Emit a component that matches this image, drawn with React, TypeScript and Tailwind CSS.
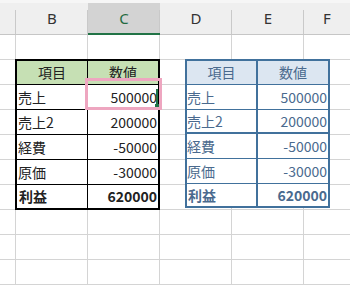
import React from 'react';

const cols = ['', 'B', 'C', 'D', 'E', 'F'];
const bodyRows = 10;

// 表のデータ
const rows = [
  { label: '売上', value: '500000' },
  { label: '売上2', value: '200000' },
  { label: '経費', value: '-50000' },
  { label: '原価', value: '-30000' },
];

const font = { fontFamily: '"Noto Sans CJK JP", "Noto Sans", sans-serif' };

// 枠線が黒のセル範囲の表 (B3:C8)
const PlainTable = () => (
  <div
    className="col-start-2 col-span-2 row-start-3 row-span-6 -ml-px -mt-px z-10 bg-white border-2 border-black grid grid-cols-[71px_1fr] grid-rows-[24px_25px_25px_25px_25px_23px] text-[14px] text-[#222]"
    style={font}
  >
    <div className="bg-[#c6e0b4] border-r border-b border-black flex items-center justify-center">項目</div>
    <div className="bg-[#c6e0b4] border-b border-black flex items-center justify-center">数値</div>
    {rows.map((r) => (
      <React.Fragment key={r.label}>
        <div className="border-r border-b border-black flex items-center pl-[1px]">{r.label}</div>
        <div className="border-b border-black flex items-center justify-end pr-[1px]">{r.value}</div>
      </React.Fragment>
    ))}
    <div className="border-r border-black flex items-center pl-[2px] font-bold">利益</div>
    <div className="flex items-center justify-end pr-[1px] font-bold">620000</div>
  </div>
);

// 貼り付けた図 (青い枠の表)
const PictureTable = () => (
  <div
    className="absolute left-[185px] top-[59px] w-[145px] h-[149px] bg-white border-2 border-[#41719c] grid grid-cols-[71px_1fr] grid-rows-[24px_25px_24px_25px_25px_1fr] text-[14px] text-[#4a6a8e] z-20"
    style={font}
  >
    <div className="bg-[#dce6f1] border-r-2 border-b border-[#41719c] flex items-center justify-center">項目</div>
    <div className="bg-[#dce6f1] border-b border-[#41719c] flex items-center justify-center">数値</div>
    {rows.map((r, i) => (
      <React.Fragment key={r.label}>
        <div className={`border-r-2 border-[#41719c] flex items-center ${i === 1 ? 'border-b-2' : 'border-b'}`}>{r.label}</div>
        <div className={`border-[#41719c] flex items-center justify-end pr-[1px] ${i === 1 ? 'border-b-2' : 'border-b'}`}>{r.value}</div>
      </React.Fragment>
    ))}
    <div className="border-r-2 border-[#41719c] flex items-center pl-[1px] font-bold">利益</div>
    <div className="flex items-center justify-end pr-[1px] font-bold">620000</div>
  </div>
);

export default function App() {
  return (
    <div className="w-[350px] h-[294px] overflow-hidden bg-white relative">
      <div className="grid grid-cols-[16px_72px_72px_72px_72px_1fr] grid-rows-[35px_repeat(10,25px)]">
        {/* 列見出し */}
        {cols.map((c, i) => (
          <div
            key={c + i}
            className={`relative flex items-center justify-center border-b border-[#c6c6c6] pt-[3px] text-[15px] ${
              c === 'C' ? 'bg-[#d3d3d3] text-[#1f6b41]' : 'bg-[#efefef] text-[#333]'
            }`}
            style={{ fontFamily: '"Noto Sans", "Liberation Sans", sans-serif' }}
          >
            <div className="absolute top-0 left-0 right-0 h-[3px] bg-[#f6f6f6]" />
            {i < cols.length - 1 && <div className="absolute right-0 top-[10px] bottom-0 w-px bg-[#c9c9c9]" />}
            {c}
            {c === 'C' && <div className="absolute left-0 right-0 -bottom-px h-[2px] bg-[#217346]" />}
          </div>
        ))}
        {/* シートのセル */}
        {Array.from({ length: bodyRows }).map((_, r) =>
          cols.map((c, i) => (
            <div
              key={`${r}-${i}`}
              className={`border-b border-[#d4d4d4] ${i < cols.length - 1 ? 'border-r' : ''}`}
              style={{ gridRow: r + 2, gridColumn: i + 1 }}
            />
          ))
        )}
        <PlainTable />
      </div>

      {/* 選択範囲の枠とカーソル */}
      <div className="absolute left-[85px] top-[78px] w-[77px] h-[32px] border-[3px] border-[#eea6c0] z-30" />
      <div className="absolute left-[156px] top-[89px] w-[2px] h-[16px] bg-[#217346] z-30" />
      <div className="absolute left-[155px] top-[104px] w-[4px] h-[3px] bg-[#217346] z-30" />

      <PictureTable />
    </div>
  );
}
